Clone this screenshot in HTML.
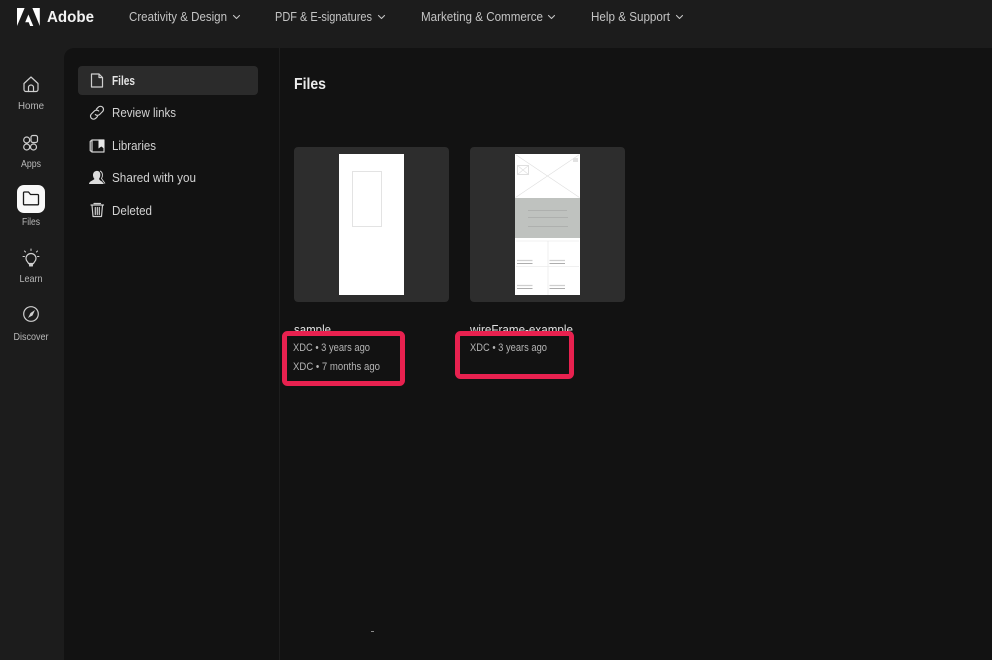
<!DOCTYPE html>
<html><head><meta charset="utf-8"><title>Adobe Files</title>
<style>
html,body{margin:0;padding:0;background:#1c1c1c;width:992px;height:660px;overflow:hidden}
svg{display:block;filter:blur(.3px)}
text{font-family:"Liberation Sans",sans-serif}
.nav{font-size:12.5px;fill:#c4c4c4}
.rail{font-size:10.5px;fill:#b8b8b8;text-anchor:middle}
.side{font-size:13px;fill:#d2d2d2}
.meta{font-size:11px;fill:#b4b4b4}
.ic{fill:none;stroke:#cfcfcf;stroke-width:1.2;stroke-linecap:round;stroke-linejoin:round}
.w{stroke:#dedede;stroke-width:.6;fill:none}
</style></head>
<body>
<svg width="992" height="660" viewBox="0 0 992 660" xmlns="http://www.w3.org/2000/svg">
<rect width="992" height="660" fill="#1c1c1c"/>
<path d="M74 48H992V660H64V58a10 10 0 0 1 10-10z" fill="#121212"/>
<rect x="279" y="48" width="1" height="612" fill="#1e1e1e"/>

<!-- logo -->
<path d="M17 8h7.600L17 26zM39.800 8h-7.400l7.400 18zM28.400 14.500l4.900 11.500h-3.200l-1.400-3.700h-3.500z" fill="#fff"/>
<text x="47" y="22" font-size="16" font-weight="700" fill="#f2f2f2" textLength="47" lengthAdjust="spacingAndGlyphs">Adobe</text>

<text class="nav" x="129" y="21" textLength="98" lengthAdjust="spacingAndGlyphs">Creativity &amp; Design</text>
<text class="nav" x="275" y="21" textLength="97" lengthAdjust="spacingAndGlyphs">PDF &amp; E-signatures</text>
<text class="nav" x="421" y="21" textLength="122" lengthAdjust="spacingAndGlyphs">Marketing &amp; Commerce</text>
<text class="nav" x="591" y="21" textLength="79" lengthAdjust="spacingAndGlyphs">Help &amp; Support</text>
<g fill="none" stroke="#c4c4c4" stroke-width="1.100" stroke-linecap="round" stroke-linejoin="round">
<path d="M233.500 15.500l3 3 3-3"/><path d="M378.500 15.500l3 3 3-3"/><path d="M548.500 15.500l3 3 3-3"/><path d="M676.500 15.500l3 3 3-3"/>
</g>

<!-- rail -->
<path class="ic" d="M24 83.500l7-6.500 7 6.500v6a2 2 0 0 1-2 2H26a2 2 0 0 1-2-2z"/>
<path class="ic" d="M28.500 91.500v-4a2.500 2.500 0 0 1 5 0v4"/>
<text class="rail" x="31" y="109" textLength="26" lengthAdjust="spacingAndGlyphs">Home</text>

<circle class="ic" cx="26.700" cy="140" r="3"/><circle class="ic" cx="26.700" cy="147" r="3"/><circle class="ic" cx="33.500" cy="147" r="3"/>
<rect class="ic" x="31" y="135.500" width="6.500" height="7" rx="1.800"/>
<text class="rail" x="31" y="167" textLength="20" lengthAdjust="spacingAndGlyphs">Apps</text>

<rect x="17" y="185" width="28" height="28" rx="7" fill="#f8f8f8"/>
<path d="M23.500 204v-11a1 1 0 0 1 1-1h4l2 2.500h7a1 1 0 0 1 1 1V204a.8.800 0 0 1-.8.800H24.300a.8.800 0 0 1-.8-.8z" fill="none" stroke="#1a1a1a" stroke-width="1.300" stroke-linejoin="round"/>
<text class="rail" x="31" y="225" textLength="18" lengthAdjust="spacingAndGlyphs">Files</text>

<path class="ic" d="M28.500 263.500c-.4-1.500-2.500-2.500-2.500-5a5 5 0 0 1 10 0c0 2.500-2.100 3.500-2.500 5z"/>
<path d="M28.800 264h4.400l-.4 2.500h-3.600z" fill="#cfcfcf"/>
<g stroke="#cfcfcf" stroke-width="1" stroke-linecap="round"><path d="M31 249v1.500M24.500 251l1 1M37.500 251l-1 1M23 256.500h1.500M37.500 256.500h1.500"/></g>
<text class="rail" x="31" y="282" textLength="23" lengthAdjust="spacingAndGlyphs">Learn</text>

<circle class="ic" cx="31" cy="314" r="7.300" stroke-width="1.400"/>
<path d="M35 310l-2.500 5.500-3 1.500-1.500 1 1-2 1.500-3z" fill="#cfcfcf"/>
<text class="rail" x="31" y="340" textLength="35" lengthAdjust="spacingAndGlyphs">Discover</text>

<!-- sidebar -->
<rect x="78" y="66" width="180" height="29" rx="4" fill="#2b2b2b"/>
<path class="ic" d="M91.500 74h7.500l3.500 3.500V87h-11zM99 74v3.500h3.500"/>
<text x="112" y="85" font-size="13" font-weight="700" fill="#e4e4e4" textLength="23" lengthAdjust="spacingAndGlyphs">Files</text>

<g class="ic" stroke-width="1.300">
<path d="M96.500 109l1.800-1.800a3 3 0 0 1 4.300 4.300l-3 3a3 3 0 0 1-4.300 0"/>
<path d="M97.500 116.500l-1.800 1.800a3 3 0 0 1-4.300-4.300l3-3a3 3 0 0 1 4.300 0"/>
</g>
<text class="side" x="112" y="117" textLength="64" lengthAdjust="spacingAndGlyphs">Review links</text>

<path class="ic" d="M92 140h12v12H92l-1.800-1.500V141.500zM92 140v12" stroke="#c4c4c4"/>
<path d="M98.500 139.500h5.500v9l-2.700-2-2.800 2z" fill="#e6e6e6"/>
<text class="side" x="112" y="150" textLength="44" lengthAdjust="spacingAndGlyphs">Libraries</text>

<path d="M89 184c.3-3 4-3.500 5.500-5-2-2-2.500-7 1.500-8 4-.8 5 3 4 6l-1 2c1 1.500 2 2 3 2.500l2 2.500z" fill="#dcdcdc"/>
<path d="M100 171c3 1.500 3 5 1.500 7.500l3.500 5" fill="none" stroke="#cfcfcf" stroke-width="1"/>
<text class="side" x="112" y="182" textLength="84" lengthAdjust="spacingAndGlyphs">Shared with you</text>

<path class="ic" d="M91 205h12.500M92 205l1 11.500h8.500l1-11.500M94 203.500h6.500M95.300 207.500v7M97.300 207.500v7M99.300 207.500v7" stroke-width="1.100"/>
<text class="side" x="112" y="215" textLength="40" lengthAdjust="spacingAndGlyphs">Deleted</text>

<!-- main -->
<text x="294" y="89" font-size="16" font-weight="700" fill="#ececec" textLength="32" lengthAdjust="spacingAndGlyphs">Files</text>

<rect x="294" y="147" width="155" height="155" rx="4" fill="#2d2d2d"/>
<rect x="339" y="154" width="65" height="141" fill="#fff"/>
<rect x="352.500" y="171.500" width="29" height="55" fill="none" stroke="#dcdcdc" stroke-width=".8"/>

<rect x="470" y="147" width="155" height="155" rx="4" fill="#2d2d2d"/>
<rect x="515" y="154" width="65" height="141" fill="#fff"/>
<path class="w" d="M515.500 154.500L579.500 197.500M579.500 154.500L515.500 197.500"/>
<rect x="517.500" y="165.500" width="11" height="9" fill="#fff" stroke="#d8d8d8" stroke-width=".8"/>
<path class="w" d="M517.500 165.500l11 9M528.500 165.500l-11 9"/>
<rect x="573" y="158" width="5" height="4" fill="#e2e2e2"/>
<rect x="515" y="198" width="65" height="40" fill="#bfc2bf"/>
<g stroke="#a9aba9" stroke-width=".7"><path d="M528 210.500h39M528 217.500h40M528 226.500h40"/></g>
<g stroke="#ececec" stroke-width=".8"><path d="M516 241h63M516 266.500h63M548 241v54"/></g>
<g stroke="#cfcfcf" stroke-width="1.200"><path d="M517 260.500h15.500M549.500 260.500h15.500M517 285.500h15.500M549.500 285.500h15.500"/></g>
<g stroke="#adadad" stroke-width="1"><path d="M517 263.500h15.500M549.500 263.500h15.500M517 288.500h15.500M549.500 288.500h15.500"/></g>

<text x="294" y="334" font-size="12.500" fill="#e0e0e0" textLength="37" lengthAdjust="spacingAndGlyphs">sample</text>
<text x="470" y="334" font-size="12.500" fill="#e0e0e0" textLength="103" lengthAdjust="spacingAndGlyphs">wireFrame-example</text>

<rect x="284.500" y="333.500" width="118" height="50" rx="3" fill="#121212" stroke="#e8214f" stroke-width="5"/>
<rect x="457.500" y="333.500" width="114" height="43" rx="3" fill="#121212" stroke="#e8214f" stroke-width="5"/>

<text class="meta" x="293" y="351" textLength="77" lengthAdjust="spacingAndGlyphs">XDC • 3 years ago</text>
<text class="meta" x="293" y="370" textLength="87" lengthAdjust="spacingAndGlyphs">XDC • 7 months ago</text>
<text class="meta" x="470" y="351" textLength="77" lengthAdjust="spacingAndGlyphs">XDC • 3 years ago</text>

<rect x="371" y="631" width="3" height="1" fill="#8a8a8a"/>
</svg>
</body></html>
